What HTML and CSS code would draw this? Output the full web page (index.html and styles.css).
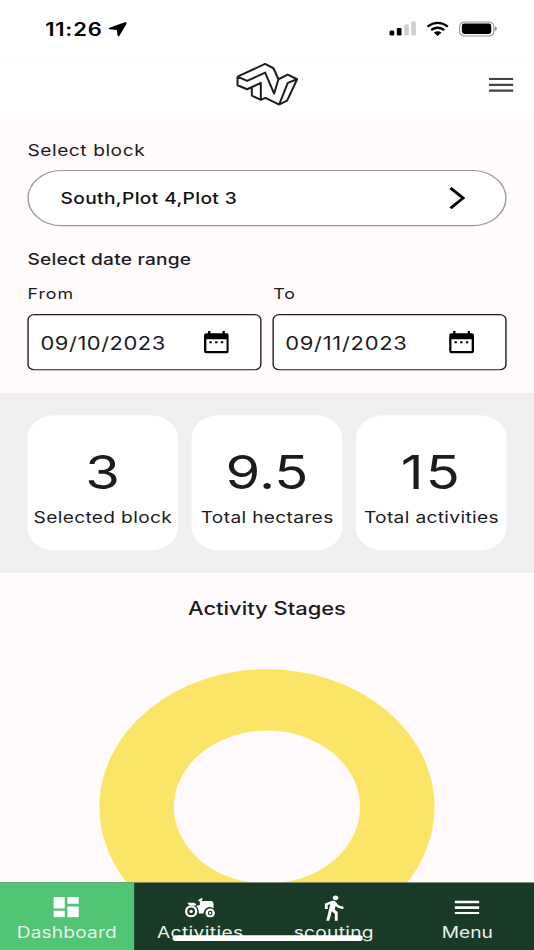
FILE: index.html
```html
<!DOCTYPE html>
<html lang="en">
<head>
<meta charset="utf-8">
<title>Dashboard</title>
<link rel="stylesheet" href="styles.css">
</head>
<body>
<div class="screen">
  <div class="status">
    <div class="clock"><span class="time">11:26</span>
      <svg class="arrow" viewBox="325 64 56 48" preserveAspectRatio="none"><path d="M379 67Q381 69 379 73L359 107Q355 111 353 106L351 90L329 88Q324 86 329 83L373 67Q377 65 379 67Z"/></svg>
    </div>
    <svg class="indicators" viewBox="60 62 326 50" preserveAspectRatio="none">
      <rect x="62" y="93" width="14" height="15" rx="4"/><rect x="84" y="85" width="14" height="23" rx="4"/>
      <rect x="106" y="75" width="14" height="33" rx="4" fill="#cfcfcf"/><rect x="127" y="66" width="14" height="42" rx="4" fill="#cfcfcf"/>
      <path d="M176 81Q206 59 237 81M187 91Q206 78 226 91" fill="none" stroke="#000" stroke-width="7"/>
      <path d="M195 99Q206 91 218 99L206 109Z"/>
      <rect x="272" y="67" width="103" height="42" rx="14" fill="none" stroke="#8c8c8c" stroke-width="3"/>
      <rect x="279" y="72" width="88" height="31" rx="7"/><path d="M378 81Q384 82 384 87Q384 92 378 94Z" fill="#8c8c8c"/>
    </svg>
  </div>
  <header class="header">
    <svg class="logo" viewBox="45 35 192 132" preserveAspectRatio="none"><path d="M51 79L134 41L159 54L174 87L202 73L230 87L200 151L176 163L135 143L121 149L94 136V112M51 79V105L80 117L121 98V149M51 79L80 92L134 67L161 130L174 87M230 87L202 98L176 163"/></svg>
    <svg class="burger" viewBox="0 0 18 12.6" preserveAspectRatio="none"><path d="M0 1H18M0 6.3H18M0 11.6H18"/></svg>
  </header>
  <main class="content">
    <section class="filters">
      <span class="label block-label">Select block</span>
      <div class="select"><span class="value">South,Plot 4,Plot 3</span>
        <svg class="chevron" viewBox="0 0 12 20" preserveAspectRatio="none"><path d="M1 1L10.2 10L1 19"/></svg></div>
      <span class="range-title">Select date range</span>
      <div class="dates">
        <div class="field"><span class="date-label">From</span>
          <div class="date"><span class="date-text">09/10/2023</span><svg class="cal" viewBox="0 0 74 68" preserveAspectRatio="none"><path fill-rule="evenodd" d="M12 0H19V7H55V0H62V7H67Q74 7 74 14V61Q74 68 67 68H7Q0 68 0 61V14Q0 7 7 7H12ZM7 25V61H67V25ZM16 31H23V37H16ZM33 31H40V37H33ZM50 31H57V37H50Z"/></svg></div></div>
        <div class="field"><span class="date-label">To</span>
          <div class="date"><span class="date-text to-text">09/11/2023</span><svg class="cal" viewBox="0 0 74 68" preserveAspectRatio="none"><path fill-rule="evenodd" d="M12 0H19V7H55V0H62V7H67Q74 7 74 14V61Q74 68 67 68H7Q0 68 0 61V14Q0 7 7 7H12ZM7 25V61H67V25ZM16 31H23V37H16ZM33 31H40V37H33ZM50 31H57V37H50Z"/></svg></div></div>
      </div>
    </section>
    <section class="stats">
      <div class="card"><span class="number">3</span><span class="caption">Selected block</span></div>
      <div class="card"><span class="number">9.5</span><span class="caption">Total hectares</span></div>
      <div class="card"><span class="number wide">15</span><span class="caption">Total activities</span></div>
    </section>
    <section class="stages">
      <h2>Activity Stages</h2>
      <svg class="donut" viewBox="0 0 246 246"><circle cx="123" cy="123" r="95.2"/></svg>
    </section>
  </main>
  <nav class="nav">
    <a class="tab active"><span class="icon"><svg class="dash" viewBox="0 0 76 62" preserveAspectRatio="none"><path d="M0 0H34V34H0ZM42 0H76V20H42ZM0 41H34V62H0ZM42 28H76V62H42Z"/></svg></span><span class="tab-label dash-label">Dashboard</span></a>
    <a class="tab"><span class="icon"><svg class="tractor" viewBox="552 78 98 62" preserveAspectRatio="none">
      <circle cx="575" cy="121" r="15" fill="none" stroke="#fff" stroke-width="7"/><circle cx="575" cy="121" r="5"/>
      <circle cx="632" cy="126" r="10.5" fill="none" stroke="#fff" stroke-width="7"/><circle cx="632" cy="126" r="3.5"/>
      <path d="M564 95H583Q589 96 591 103H573Q565 102 564 95ZM595 88L606 80L610 84L606 90H635Q642 91 642 97V112Q636 107 628 108Q615 110 612 127H598Q598 112 590 105L601 102V91Z"/></svg></span><span class="tab-label activities-label">Activities</span></a>
    <a class="tab"><span class="icon"><svg class="walk" viewBox="0 0 24 24"><path d="M13.5 5.5c1.1 0 2-.9 2-2s-.9-2-2-2-2 .9-2 2 .9 2 2 2zM9.8 8.9L7 23h2.1l1.8-8 2.1 2v6h2v-7.5l-2.1-2 .6-3C14.8 12 16.8 13 19 13v-2c-1.9 0-3.5-1-4.3-2.4l-1-1.6c-.4-.6-1-1-1.7-1-.3 0-.5.1-.8.1L6 8.3V13h2V9.6l1.8-.7"/></svg></span><span class="tab-label scouting-label">scouting</span></a>
    <a class="tab"><span class="icon"><svg class="menu" viewBox="0 0 75 43" preserveAspectRatio="none"><path d="M0 0H75V8H0ZM0 17.5H75V25.5H0ZM0 35H75V43H0Z"/></svg></span><span class="tab-label">Menu</span></a>
    <div class="home-bar"></div>
  </nav>
</div>
</body>
</html>
```
FILE: styles.css
```css
* { box-sizing: border-box; }
html, body { margin: 0; width: 534px; height: 950px; overflow: hidden; }
body { background: #fffafb; font-family: Inter, "Liberation Sans", sans-serif; color: #1c1b1f; }
svg { display: block; flex: none; }

/* A 390 x 844 phone canvas stretched to fill the window. */
.screen {
  width: 390px; height: 844px; overflow: hidden;
  display: flex; flex-direction: column;
  background: #fffafb;
  transform: scale(1.36923, 1.12559); transform-origin: 0 0;
}
span, h2 { white-space: nowrap; }

.status { height: 52px; background: #fff; display: flex; justify-content: space-between; align-items: center; padding: 0 26.2px 0 33px; flex: none; }
.clock { display: flex; align-items: center; gap: 4.5px; }
.time { font-size: 16px; font-weight: 600; line-height: 20px; letter-spacing: .6px; color: #000; }
.arrow { width: 13.6px; height: 14.2px; }
.indicators { width: 79.4px; height: 14.8px; margin-top: -.5px; }

.header { height: 50.5px; background: #fff; flex: none; display: grid; grid-template-columns: 1fr auto 1fr; align-items: center; padding: 0 15px; }
.logo { grid-column: 2; width: 46.7px; height: 39.1px; margin-top: -5.5px; fill: none; stroke: #1d1d1d; stroke-width: 6; stroke-linejoin: round; }
.burger { grid-column: 3; justify-self: end; width: 18px; height: 12.6px; margin-top: -4px; stroke: #45424b; stroke-width: 2; }

.content { flex: 1; min-height: 0; overflow: hidden; }
.filters { height: 246.5px; padding: 21.2px 20px 0; display: flex; flex-direction: column; align-items: flex-start; }
.label { font-size: 14px; line-height: 20px; letter-spacing: .4px; }
.select { width: 350px; height: 50px; margin-top: 7.3px; padding: 0 29px 0 23.2px; border: 1px solid #999; border-radius: 25px; background: #fff; display: flex; justify-content: space-between; align-items: center; }
.value { font-size: 14px; font-weight: 500; line-height: 20px; letter-spacing: .26px; color: #111; }
.chevron { width: 12px; height: 20px; fill: none; stroke: #000; stroke-width: 2.3; }
.range-title { margin-top: 19px; font-size: 14px; line-height: 20px; font-weight: 500; letter-spacing: .13px; }
.dates { display: flex; gap: 9px; margin-top: 11px; width: 350px; }
.field { flex: 1; display: flex; flex-direction: column; }
.field:last-child .date { margin-left: -.8px; }
.date-label { font-size: 13px; line-height: 20px; letter-spacing: .75px; }
.date { margin-top: 8px; height: 50px; border: 1px solid #1c1b1f; border-radius: 5px; background: #fff; display: flex; align-items: center; justify-content: space-between; padding: 0 22.5px 0 8.6px; font-size: 16px; }
.date-text { letter-spacing: .38px; padding-top: 2px; }
.to-text { letter-spacing: .53px; }
.cal { width: 18.2px; height: 20px; }

.stats { height: 160px; background: #efefef; display: flex; gap: 10px; padding: 20px; }
.card { flex: 1; min-width: 0; background: #fff; border-radius: 20px; display: flex; flex-direction: column; align-items: center; padding-top: 25.4px; }
.number { font-size: 41px; line-height: 50px; }
.wide { letter-spacing: 1.5px; }
.caption { font-size: 14px; line-height: 20px; margin-top: 5.2px; letter-spacing: .24px; margin-right: -.2px; }

.stages { display: flex; flex-direction: column; align-items: center; }
.stages h2 { margin: 21px 0 0; font-size: 16px; line-height: 20px; font-weight: 500; }
.donut { width: 246px; height: 246px; margin-top: 44px; fill: none; stroke: #fce467; stroke-width: 54.4; }

.nav { height: 60.3px; flex: none; display: grid; grid-template-columns: repeat(4, 1fr); background: #1a3a28; color: #fff; position: relative; }
.tab { display: flex; flex-direction: column; align-items: center; }
.active { background: #51c573; }
.icon { height: 24px; margin-top: 10.4px; display: flex; align-items: center; }
.tab svg { fill: #fff; }
.tab-label { font-size: 14px; line-height: 20px; color: #e9f3ec; }
.dash-label { letter-spacing: .1px; }
.activities-label { letter-spacing: .28px; }
.scouting-label { letter-spacing: .2px; }
.dash { width: 18.5px; height: 18.4px; margin-right: .8px; }
.tractor { width: 23.9px; height: 18.4px; }
.walk { width: 25px; height: 25px; }
.menu { width: 18.3px; height: 12.7px; }
.home-bar { position: absolute; left: 126px; bottom: 7.8px; width: 138.5px; height: 5px; border-radius: 3px; background: #fff; }
```
